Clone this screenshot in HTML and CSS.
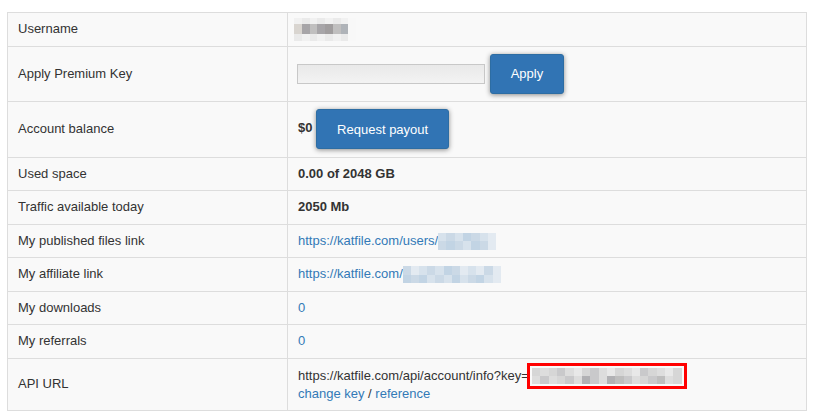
FILE: index.html
```html
<!DOCTYPE html>
<html>
<head>
<meta charset="utf-8">
<link rel="stylesheet" href="styles.css">
</head>
<body>
<table class="acct">
  <tr>
    <td class="lbl">Username</td>
    <td class="val"><span class="blur blur-user"><span class="row r-top"><i class="c1"></i><i class="c2"></i><i class="c1"></i><i class="c2"></i><i class="c1"></i><i class="c2"></i><i class="c1"></i><i class="c3"></i></span><span class="row r-mid"><i class="g1"></i><i class="g2"></i><i class="g3"></i><i class="g2"></i><i class="g4"></i><i class="g3"></i><i class="g5"></i><i class="c3"></i></span><span class="row r-bot"><i class="c2"></i><i class="c1"></i><i class="c2"></i><i class="c1"></i><i class="c2"></i><i class="c1"></i><i class="c2"></i><i class="c3"></i></span></span></td>
  </tr>
  <tr>
    <td class="lbl">Apply Premium Key</td>
    <td class="val"><input class="key-input" type="text"> <button class="btn btn-apply">Apply</button></td>
  </tr>
  <tr>
    <td class="lbl">Account balance</td>
    <td class="val"><b>$0</b> <button class="btn btn-payout">Request payout</button></td>
  </tr>
  <tr>
    <td class="lbl">Used space</td>
    <td class="val"><b>0.00 of 2048 GB</b></td>
  </tr>
  <tr>
    <td class="lbl">Traffic available today</td>
    <td class="val"><b>2050 Mb</b></td>
  </tr>
  <tr>
    <td class="lbl">My published files link</td>
    <td class="val"><a href="#">https://katfile.com/users/<span class="blur blur-link w58"><span class="row"><i class="b1"></i><i class="b2"></i><i class="b1"></i><i class="b3"></i><i class="b2"></i><i class="b1"></i><i class="b4"></i></span><span class="row"><i class="b2"></i><i class="b3"></i><i class="b2"></i><i class="b1"></i><i class="b3"></i><i class="b2"></i><i class="b4"></i></span></span></a></td>
  </tr>
  <tr>
    <td class="lbl">My affiliate link</td>
    <td class="val"><a href="#">https://katfile.com/<span class="blur blur-link w98"><span class="row"><i class="b2"></i><i class="b4"></i><i class="b1"></i><i class="b2"></i><i class="b1"></i><i class="b3"></i><i class="b2"></i><i class="b4"></i><i class="b1"></i><i class="b4"></i><i class="b2"></i><i class="b4"></i></span><span class="row"><i class="b3"></i><i class="b2"></i><i class="b3"></i><i class="b1"></i><i class="b2"></i><i class="b1"></i><i class="b3"></i><i class="b1"></i><i class="b2"></i><i class="b3"></i><i class="b1"></i><i class="b4"></i></span></span></a></td>
  </tr>
  <tr>
    <td class="lbl">My downloads</td>
    <td class="val"><a href="#">0</a></td>
  </tr>
  <tr>
    <td class="lbl">My referrals</td>
    <td class="val"><a href="#">0</a></td>
  </tr>
  <tr>
    <td class="lbl">API URL</td>
    <td class="val api">https://katfile.com/api/account/info?key=<span class="keybox"><span class="blur blur-key"><span class="row"><i class="k1"></i><i class="k2"></i><i class="k1"></i><i class="k3"></i><i class="k2"></i><i class="k4"></i><i class="k1"></i><i class="k3"></i><i class="k2"></i><i class="k4"></i><i class="k1"></i><i class="k2"></i><i class="k4"></i><i class="k3"></i><i class="k1"></i><i class="k2"></i><i class="k4"></i><i class="k1"></i></span><span class="row"><i class="k2"></i><i class="k3"></i><i class="k2"></i><i class="k1"></i><i class="k3"></i><i class="k2"></i><i class="k5"></i><i class="k3"></i><i class="k2"></i><i class="k5"></i><i class="k6"></i><i class="k3"></i><i class="k2"></i><i class="k1"></i><i class="k3"></i><i class="k6"></i><i class="k2"></i><i class="k1"></i></span></span></span><br><a href="#">change key</a> / <a href="#">reference</a></td>
  </tr>
</table>
</body>
</html>
```

FILE: styles.css
```css
html, body {
  margin: 0;
  padding: 0;
  background: #ffffff;
}
body {
  font-family: "Liberation Sans", Arial, sans-serif;
  font-size: 13px;
  line-height: 18px;
  color: #333333;
}
.acct {
  margin: 12px 0 0 7px;
  width: 800px;
  border-collapse: collapse;
  border: 1px solid #dddddd;
  background: #f9f9f9;
}
.acct td {
  border: 1px solid #dddddd;
  padding: 7.25px 10px;
  vertical-align: middle;
  line-height: 18px;
  height: 18px;
}
.acct td.lbl {
  width: 259px;
}
.acct td.api {
  padding-top: 8px;
  padding-bottom: 7px;
}
.acct b {
  font-weight: bold;
}
a {
  color: #337ab7;
  text-decoration: none;
}
.key-input {
  box-sizing: border-box;
  width: 188px;
  height: 20px;
  margin: 0 0 0 -1px;
  padding: 0 4px;
  border: 1px solid #c8c8c8;
  background: linear-gradient(#e9e9e9, #f3f3f3);
  vertical-align: middle;
  font: inherit;
}
.btn {
  box-sizing: border-box;
  height: 40px;
  padding: 0 20px;
  border: 1px solid #2d6da3;
  border-radius: 3px;
  background: #3174b4;
  color: #ffffff;
  font-family: "Liberation Sans", Arial, sans-serif;
  font-size: 13px;
  vertical-align: middle;
  box-shadow: 0 1px 5px rgba(0, 0, 0, 0.45);
  cursor: pointer;
}
.btn-apply {
  margin-left: 1px;
}
.blur {
  display: inline-flex;
  flex-direction: column;
}
.blur .row {
  display: flex;
  flex: 1;
}
.blur i {
  display: block;
  flex: 1;
}
.blur-user {
  width: 62px;
  height: 23px;
  margin: -6px 0 -6px -4px;
  vertical-align: middle;
}
.blur-user .r-top { height: 6px; flex: none; }
.blur-user .r-mid { height: 10px; flex: none; }
.blur-user .r-bot { height: 7px; flex: none; }
.c1 { background: #f1f1f1; }
.c2 { background: #eaeaea; }
.c3 { background: #f8f8f8; }
.g1 { background: #d9d5d0; }
.g2 { background: #a7a5a8; }
.g3 { background: #c0bfbf; }
.g4 { background: #a09d9e; }
.g5 { background: #afb3b8; }
.blur-link {
  height: 17px;
  margin: -4px 0;
  vertical-align: middle;
}
.w58 { width: 58px; }
.w98 { width: 98px; }
.b1 { background: #d7e2ec; }
.b2 { background: #cbd9e6; }
.b3 { background: #c2d4e4; }
.b4 { background: #e3eaf1; }
.keybox {
  display: inline-block;
  box-sizing: border-box;
  height: 26px;
  margin: -6px 0 -6px -2px;
  padding: 2px;
  border: 3px solid #ff0000;
  vertical-align: middle;
}
.blur-key {
  width: 150px;
  height: 16px;
  vertical-align: top;
}
.k1 { background: #d6d6d6; }
.k2 { background: #dddddd; }
.k3 { background: #c9c9cb; }
.k4 { background: #e8e8e8; }
.k5 { background: #b1b1b4; }
.k6 { background: #bebebe; }
```
